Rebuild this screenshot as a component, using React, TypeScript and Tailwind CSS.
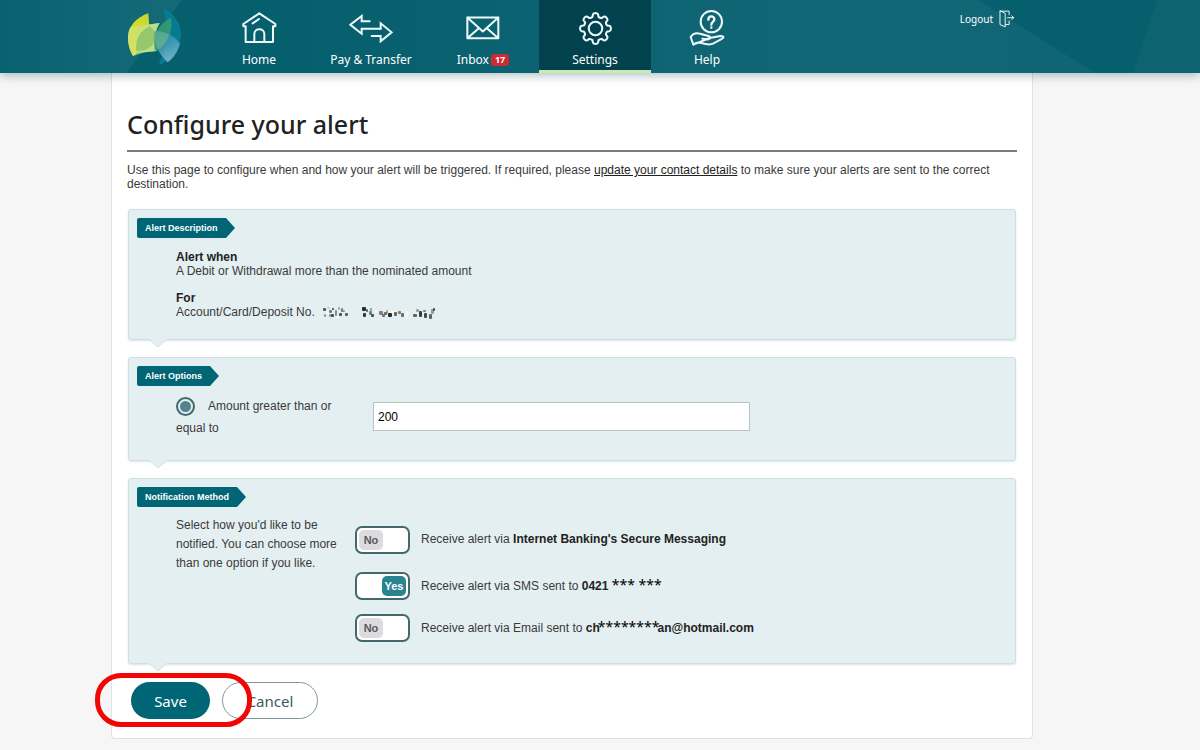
import { useState } from "react";
import type { ReactNode } from "react";

const brand = "font-['Noto_Sans',sans-serif]";

function Logo() {
  return (
    <svg viewBox="20 14 165 174" className="h-[58px] w-[55px]" aria-hidden="true">
      <defs>
        <linearGradient id="lime" x1="1" y1="0" x2="0.2" y2="1">
          <stop offset="0" stopColor="#c3d62c" />
          <stop offset="0.5" stopColor="#d2dc2a" />
          <stop offset="1" stopColor="#e6e41f" />
        </linearGradient>
        <linearGradient id="blade" x1="0.2" y1="0" x2="0.6" y2="1">
          <stop offset="0" stopColor="#2f8f9c" />
          <stop offset="0.5" stopColor="#4b9fb9" />
          <stop offset="1" stopColor="#8cc6d6" />
        </linearGradient>
      </defs>
      <path d="M130 18C158 32 182 62 182 96C182 132 158 166 121 188L116 178C140 150 142 70 130 18Z" fill="#087a92" />
      <path d="M84 33C46 46 23 74 23 107C23 128 29 146 38 161C46 157 50 154 50 150C46 118 58 92 87 73Z" fill="url(#lime)" />
      <path d="M30 74C60 70 92 66 118 62C104 86 100 112 108 146C84 148 60 152 38 161C28 144 23 126 23 107C23 94 25 84 30 74Z" fill="#cfe07a" opacity=".75" />
      <path d="M74 68L118 62C102 86 100 114 110 146L50 151C44 118 54 88 74 68Z" fill="#c0e390" opacity=".85" />
      <path d="M48 146C44 112 58 86 88 72C104 84 110 98 104 114C96 136 76 147 48 146Z" fill="#8dc162" opacity=".8" />
      <path d="M152 46C158 90 140 132 104 145C96 108 108 68 152 46Z" fill="#379b72" opacity=".9" />
      <path d="M103 86C138 86 164 102 179 124C172 150 158 168 142 180C114 154 98 122 103 86Z" fill="url(#blade)" opacity=".8" />
      <path d="M103 86C120 86 134 90 146 97C140 118 126 134 113 142C104 124 100 106 103 86Z" fill="#6fb58a" opacity=".6" />
    </svg>
  );
}

const line = {
  fill: "none",
  stroke: "#eefafa",
  strokeWidth: 6,
  strokeLinejoin: "round",
  strokeLinecap: "round",
} as const;

function HomeIcon() {
  return (
    <svg viewBox="425 37 105 96" className="h-8 w-[35px]" aria-hidden="true" {...line}>
      <path d="M436 80H429V73L477 41L525 73V80H518V127H436Z" />
      <path d="M462 127V103C462 84 492 84 492 103V127M457 71L476 58" />
    </svg>
  );
}

function TransferIcon() {
  return (
    <svg viewBox="747 40 132 87" className="h-[29px] w-11" aria-hidden="true" {...line} strokeLinejoin="miter">
      <path d="M809 62H785V46L751 72L785 99V84H842V68L875 95L842 122V106H815" />
    </svg>
  );
}

function MailIcon() {
  return (
    <svg viewBox="198 49 101 71" className="h-6 w-[34px]" aria-hidden="true" {...line}>
      <path d="M202 53H294V115H202ZM202 53L248 95L294 53M202 115L236 85M294 115L260 85" />
    </svg>
  );
}

const polar = (r: number, deg: number) => {
  const a = (deg * Math.PI) / 180;
  return `${(r * Math.cos(a)).toFixed(1)} ${(r * Math.sin(a)).toFixed(1)}`;
};
const gearPath =
  Array.from({ length: 8 }, (_, i) => {
    const a = i * 45;
    return `${i ? "L" : "M"}${polar(36, a - 14)}L${polar(42, a - 11)}Q${polar(46, a - 9)} ${polar(46, a)}Q${polar(46, a + 9)} ${polar(42, a + 11)}L${polar(36, a + 14)}Q${polar(33, a + 22.5)} ${polar(36, a + 31)}`;
  }).join("") + "Z";

function GearIcon() {
  return (
    <svg viewBox="-49 -49 98 98" className="h-[33px] w-[33px]" aria-hidden="true" {...line}>
      <path d={gearPath} />
      <circle r="20" />
    </svg>
  );
}

function HelpIcon() {
  return (
    <svg viewBox="862 28 108 108" className="h-9 w-9" aria-hidden="true" {...line}>
      <circle cx="929" cy="63" r="32" />
      <path d="M920 57C920 44 938 44 938 56C938 64 929 63 929 72M929 80V81" strokeWidth="7" />
      <path d="M875 132L867 109C874 98 884 96 895 99L923 107C930 111 924 117 916 116L902 114M924 112L956 106C968 106 968 112 958 116L934 129C923 134 912 131 899 127C889 124 882 126 875 132Z" />
    </svg>
  );
}

function LogoutIcon() {
  return (
    <svg viewBox="296 35 49 54" className="h-[18px] w-4" aria-hidden="true" {...line} strokeWidth="3">
      <path d="M299 38V79L315 86V46ZM299 38H327V49M327 68V79H316M322 58H341M335 52L341 58L335 64" />
    </svg>
  );
}

const navItems: { label: string; icon: ReactNode; badge?: number; active?: boolean }[] = [
  { label: "Home", icon: <HomeIcon /> },
  { label: "Pay & Transfer", icon: <TransferIcon /> },
  { label: "Inbox", icon: <MailIcon />, badge: 17 },
  { label: "Settings", icon: <GearIcon />, active: true },
  { label: "Help", icon: <HelpIcon /> },
];

function Header() {
  return (
    <header className={`relative z-10 bg-[#065f6d] text-white shadow-[0_2px_10px_rgba(0,60,70,0.35)] ${brand}`}>
      <svg viewBox="0 0 1200 73" preserveAspectRatio="none" className="absolute inset-0 h-full w-full" aria-hidden="true">
        <defs>
          <linearGradient id="leftShade">
            <stop offset="0" stopColor="#096270" />
            <stop offset="1" stopColor="#156a79" />
          </linearGradient>
          <linearGradient id="midShade">
            <stop offset="0" stopColor="#065f6d" />
            <stop offset="0.7" stopColor="#126776" />
            <stop offset="1" stopColor="#0f6573" />
          </linearGradient>
        </defs>
        <path d="M0 0H182L126 73H0Z" fill="url(#leftShade)" />
        <path d="M300 0H978L1095 73H300Z" fill="url(#midShade)" />
        <path d="M1157 0H1200V73H1132Z" fill="#0e6371" />
      </svg>
      <div className="relative ml-[111px] flex max-w-[921px] items-stretch pr-[17px] pl-4">
        <a href="#top" aria-label="Bank home" className="pt-[7px]">
          <Logo />
        </a>
        <nav className="ml-[21px] flex">
          {navItems.map((item) => (
            <a
              key={item.label}
              href={`#${item.label.split(" ")[0].toLowerCase()}`}
              aria-current={item.active ? "page" : undefined}
              className={
                item.active
                  ? "flex h-[73px] w-28 flex-col items-center border-b-3 border-[#cfe8b0] bg-[#02424e]"
                  : "flex h-[73px] w-28 flex-col items-center border-b-3 border-transparent"
              }
            >
              <span className="flex h-14 items-center justify-center">{item.icon}</span>
              <span className="-mt-[3px] flex items-center gap-0.5 text-xs leading-[14px] whitespace-nowrap">
                {item.label}
                {item.badge && (
                  <span className="rounded-[3px] bg-[#cf2a31] px-1 text-[9px] leading-3 font-bold">{item.badge}</span>
                )}
              </span>
            </a>
          ))}
        </nav>
        <a href="#logout" className="mt-[9px] ml-auto flex items-center gap-1.5 self-start text-[10px] leading-5">
          Logout
          <LogoutIcon />
        </a>
      </div>
    </header>
  );
}

function Panel({ title, children }: { title: string; children: ReactNode }) {
  return (
    <section className="relative rounded-[3px] border border-[#cfe0e3] bg-[#e4eff1] p-2 shadow-[0_1px_2px_rgba(0,80,90,0.15)]">
      <div className="flex">
        <h2 className="rounded-l-[2px] bg-[#006575] px-2 text-[9px] leading-5 font-bold text-white">{title}</h2>
        <svg viewBox="0 0 9 20" className="h-5 w-[9px]" aria-hidden="true">
          <path d="M0 0L9 10L0 20Z" fill="#006575" />
        </svg>
      </div>
      <div className="px-[39px]">{children}</div>
      <svg viewBox="0 0 18 9" className="absolute top-full left-5 h-[9px] w-[18px]" aria-hidden="true">
        <path d="M0 0L9 8L18 0Z" fill="#e4eff1" />
        <path d="M1 1L9 8L17 1" fill="none" stroke="#cfe0e3" />
      </svg>
    </section>
  );
}

const specks: [number, number, number, number, string][] = [
  [1, 3, 3, 3, "#4f5a60"], [2, 9, 2, 3, "#8a9296"], [5, 2, 3, 2, "#c5cfd2"], [7, 5, 3, 3, "#6c7d84"],
  [7, 9, 3, 3, "#8d9aa0"], [10, 3, 2, 2, "#39474e"], [9, 9, 3, 3, "#495157"], [13, 5, 2, 6, "#7c8e96"],
  [16, 2, 2, 3, "#b3a38f"], [17, 8, 3, 3, "#4a555b"], [20, 5, 3, 2, "#8b9ca4"], [19, 3, 2, 4, "#6d7a80"],
  [23, 8, 3, 3, "#50626c"], [14, 11, 3, 2, "#ffffff"], [4, 6, 3, 3, "#f4f8f8"],
  [40, 2, 4, 4, "#252e34"], [44, 4, 2, 3, "#58656b"], [41, 8, 3, 4, "#303a40"], [48, 3, 2, 3, "#8c999f"],
  [47, 6, 3, 4, "#71818a"], [49, 9, 3, 3, "#3f5560"], [53, 5, 2, 3, "#ffffff"], [57, 6, 4, 4, "#8b8078"],
  [60, 9, 3, 3, "#5f7580"], [64, 5, 2, 4, "#c4a27a"], [66, 8, 4, 4, "#232c30"], [62, 7, 3, 3, "#6f6a68"],
  [69, 6, 3, 2, "#ffffff"], [72, 7, 3, 4, "#5d666b"], [76, 6, 3, 3, "#87786b"], [79, 8, 3, 4, "#6a6f70"],
  [83, 6, 5, 7, "#f2f6f5"], [86, 9, 3, 3, "#f5edc9"], [91, 9, 4, 3, "#56666e"], [94, 4, 3, 3, "#97a3a8"],
  [97, 6, 3, 6, "#354148"], [101, 5, 3, 2, "#738289"], [102, 8, 3, 5, "#3f4a50"],
  [109, 4, 3, 5, "#8f9a9e"], [107, 9, 3, 5, "#55646c"], [111, 3, 2, 3, "#3e494f"],
];

function MaskedAccount() {
  return (
    <svg viewBox="0 0 116 15" className="h-[15px] w-[116px]" role="img" aria-label="Account number hidden">
      {specks.map(([x, y, w, h, fill]) => (
        <rect key={`${x}-${y}`} x={x} y={y} width={w} height={h} rx="1" fill={fill} />
      ))}
    </svg>
  );
}

function Toggle({ label, initial, children }: { label: string; initial: boolean; children: ReactNode }) {
  const [on, setOn] = useState(initial);
  return (
    <label className="flex items-center gap-[11px]">
      <span className="relative flex">
        <input
          type="checkbox"
          role="switch"
          aria-label={label}
          checked={on}
          onChange={() => setOn(!on)}
          className="h-7 w-[55px] appearance-none rounded-[7px] border-2 border-[#42696d] bg-white"
        />
        <span
          className={
            on
              ? "pointer-events-none absolute top-1 right-1 w-6 rounded-[5px] bg-[#2a8391] text-center text-[11px] leading-5 font-bold text-white"
              : "pointer-events-none absolute top-1 left-1 w-6 rounded-[5px] bg-[#dcdcde] text-center text-[11px] leading-5 font-bold text-[#58595b]"
          }
        >
          {on ? "Yes" : "No"}
        </span>
      </span>
      <span className="pb-0.5">{children}</span>
    </label>
  );
}

export default function App() {
  const [amount, setAmount] = useState("200");
  return (
    <div id="top" className="min-h-screen bg-[#f6f6f6] pb-3 font-['Liberation_Sans',Arial,sans-serif] text-xs leading-[14px] text-[#3a3a3a]">
      <Header />
      <main className="ml-[111px] max-w-[922px] rounded-b-[4px] border border-t-0 border-[#dfe1e2] bg-white px-[15px] pt-9 pb-[19px]">
        <h1 className={`border-b-2 border-[#7b7b7b] pb-[11px] text-[25px] leading-[30px] font-medium text-[#222] ${brand}`}>
          Configure your alert
        </h1>
        <p className="mt-[11px]">
          Use this page to configure when and how your alert will be triggered. If required, please{" "}
          <a href="#contact" className="text-[#222] underline">update your contact details</a> to make sure your alerts are sent to the
          correct destination.
        </p>

        <form onSubmit={(e) => e.preventDefault()}>
          <div className="mt-[18px] flex flex-col gap-[17px] px-px">
            <Panel title="Alert Description">
              <dl className="pt-3 pb-3">
                <dt className="font-bold text-[#222]">Alert when</dt>
                <dd>A Debit or Withdrawal more than the nominated amount</dd>
                <dt className="mt-[13px] font-bold text-[#222]">For</dt>
                <dd className="flex h-[14px] items-center gap-[7px]">
                  Account/Card/Deposit No.
                  <MaskedAccount />
                </dd>
              </dl>
            </Panel>

            <Panel title="Alert Options">
              <div className="flex items-start pt-[9px] pb-[13px]">
                <label className="w-[197px] pr-8 leading-[22px]">
                  <input
                    type="radio"
                    name="rule"
                    defaultChecked
                    className="mr-[13px] h-[19px] w-[19px] appearance-none rounded-full border-2 border-[#42696d] bg-[#4f858b] bg-clip-content p-[2px] align-middle"
                  />
                  Amount greater than or equal to
                </label>
                <input
                  type="text"
                  aria-label="Alert amount"
                  value={amount}
                  onChange={(e) => setAmount(e.target.value)}
                  className="mt-[7px] h-[29px] w-[377px] border border-[#b9c2c4] bg-white px-1 text-xs text-black"
                />
              </div>
            </Panel>

            <Panel title="Notification Method">
              <div className="flex items-start pt-[9px] pb-[13px]">
                <p className="w-[179px] pr-4 leading-[19px]">
                  Select how you'd like to be notified. You can choose more than one option if you like.
                </p>
                <div className="flex flex-col pt-[10px]">
                  <Toggle label="Secure Messaging" initial={false}>
                    Receive alert via <b className="text-[#222]">Internet Banking's Secure Messaging</b>
                  </Toggle>
                  <div className="mt-[18px]">
                    <Toggle label="SMS" initial={true}>
                      Receive alert via SMS sent to <b className="text-[#222]">0421</b>{" "}
                      <span className={`text-sm leading-[14px] text-black ${brand}`}>*** ***</span>
                    </Toggle>
                  </div>
                  <div className="mt-3.5">
                    <Toggle label="Email" initial={false}>
                      Receive alert via Email sent to <b className="text-[#222]">ch</b>
                      <span className={`-mx-0.5 text-sm leading-[14px] text-black ${brand}`}>********</span>
                      <b className="text-[#222]">an@hotmail.com</b>
                    </Toggle>
                  </div>
                </div>
              </div>
            </Panel>
          </div>

          <div className={`relative mt-[18px] flex gap-3 pl-1 text-[15px] leading-5 ${brand}`}>
            <button type="submit" className="h-[37px] w-[79px] rounded-full bg-[#006575] text-white">
              Save
            </button>
            <button type="button" className="h-[37px] w-24 rounded-full border border-[#7f979b] bg-white text-[#3d5a60]">
              Cancel
            </button>
            <div className="pointer-events-none absolute -top-[9px] -left-8 h-[54px] w-[157px] rounded-[26px] border-5 border-[#f20505]" />
          </div>
        </form>
      </main>
    </div>
  );
}
